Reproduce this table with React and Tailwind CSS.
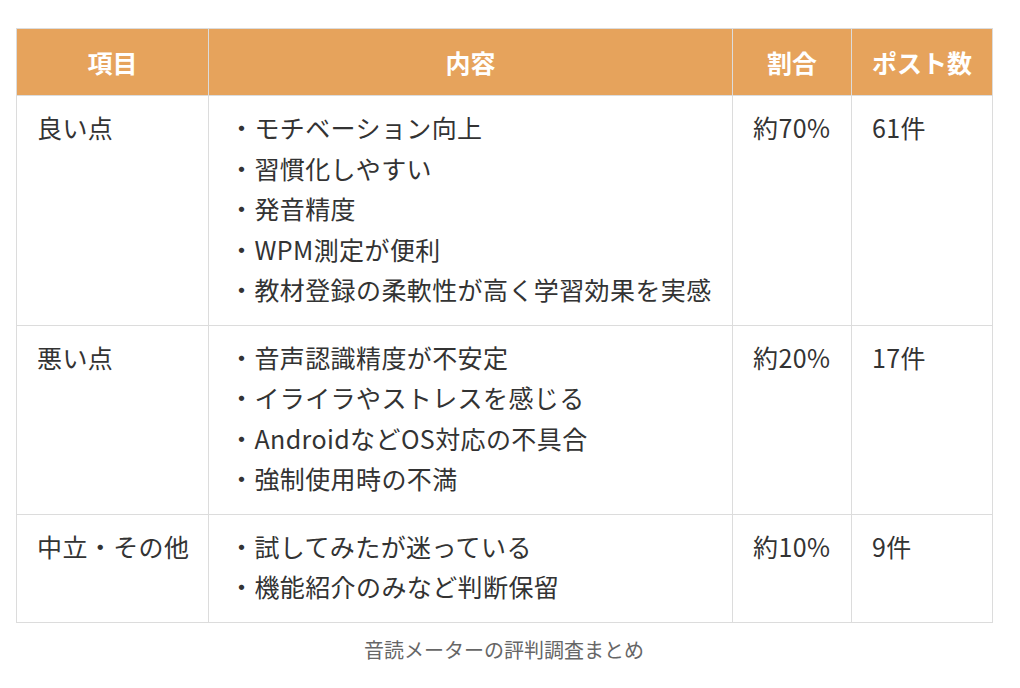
import React from 'react';

const rows = [
    {
        item: '良い点',
        lines: ['モチベーション向上', '習慣化しやすい', '発音精度', 'WPM測定が便利', '教材登録の柔軟性が高く学習効果を実感'],
        ratio: '約70%',
        posts: '61件',
    },
    {
        item: '悪い点',
        lines: ['音声認識精度が不安定', 'イライラやストレスを感じる', 'AndroidなどOS対応の不具合', '強制使用時の不満'],
        ratio: '約20%',
        posts: '17件',
    },
    {
        item: '中立・その他',
        lines: ['試してみたが迷っている', '機能紹介のみなど判断保留'],
        ratio: '約10%',
        posts: '9件',
    },
];

export default function App() {
    const font = { fontFamily: '"Noto Sans CJK JP", "Noto Sans", sans-serif' };
    const cell = 'border border-[#dcdcdc] align-top whitespace-nowrap px-[20px] pt-[11px] pb-[15px]';
    return (
        <div className="min-h-screen bg-white pt-[28px] px-[16px]" style={font}>
            <table className="w-[976px] table-fixed border-collapse text-[25px] leading-[40.5px] text-[#333]">
                <colgroup>
                    <col className="w-[192px]" />
                    <col className="w-[524px]" />
                    <col className="w-[119px]" />
                    <col className="w-[141px]" />
                </colgroup>
                <thead>
                    <tr className="bg-[#e6a35c] text-white font-bold h-[67px]">
                        <th className="border border-[#dcdcdc] text-center">項目</th>
                        <th className="border border-[#dcdcdc] text-center">内容</th>
                        <th className="border border-[#dcdcdc] text-center">割合</th>
                        <th className="border border-[#dcdcdc] text-center">ポスト数</th>
                    </tr>
                </thead>
                <tbody className="tracking-[0.4px]">
                    {rows.map((r) => (
                        <tr key={r.item}>
                            <td className={cell}>{r.item}</td>
                            <td className={cell}>
                                {r.lines.map((l) => (
                                    <div key={l}>・{l}</div>
                                ))}
                            </td>
                            <td className={cell}>{r.ratio}</td>
                            <td className={cell}>{r.posts}</td>
                        </tr>
                    ))}
                </tbody>
            </table>
            <p className="w-[976px] text-center text-[20px] text-[#666] mt-[12px]">音読メーターの評判調査まとめ</p>
        </div>
    );
}
